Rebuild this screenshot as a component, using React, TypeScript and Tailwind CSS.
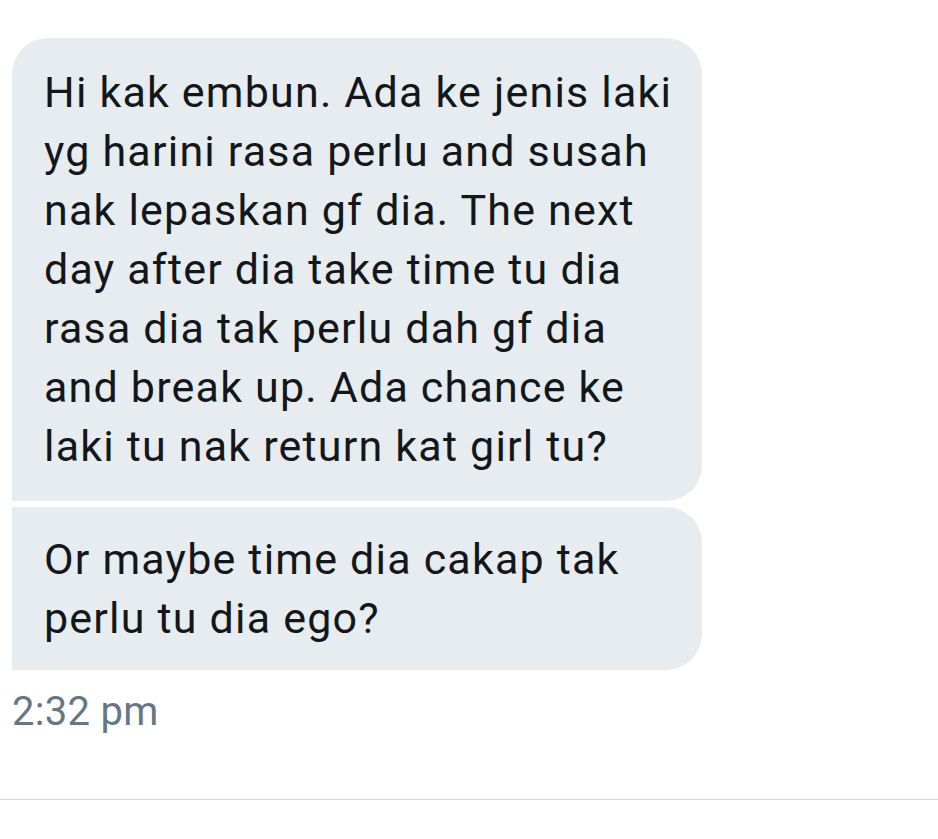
import React from "react";

const messages = [
  {
    lines: [
      "Hi kak embun. Ada ke jenis laki",
      "yg harini rasa perlu and susah",
      "nak lepaskan gf dia. The next",
      "day after dia take time tu dia",
      "rasa dia tak perlu dah gf dia",
      "and break up. Ada chance ke",
      "laki tu nak return kat girl tu?",
    ],
    box: "py-[25px] rounded-tl-[36px] rounded-tr-[36px] rounded-br-[36px]",
  },
  {
    lines: ["Or maybe time dia cakap tak", "perlu tu dia ego?"],
    box: "pt-[23px] pb-[22px] rounded-tr-[36px] rounded-br-[36px]",
  },
];

export default function App() {
  return (
    <div
      className="w-[938px] h-[839px] bg-white overflow-hidden"
      style={{ fontFamily: "Roboto, 'Liberation Sans', sans-serif" }}
    >
      <div className="pt-[38px] pl-[12px] flex flex-col gap-[6px]">
        {messages.map((m, i) => (
          <div
            key={i}
            className={`w-[690px] bg-[#e6ecf0] text-[#14171a] text-[43px] leading-[59px] tracking-[1.2px] pl-[32px] pr-[20px] ${m.box}`}
          >
            {m.lines.map((l, j) => (
              <div key={j} className="whitespace-nowrap">
                {l}
              </div>
            ))}
          </div>
        ))}
      </div>
      {/* timestamp */}
      <div className="pl-[12px] mt-[20px] text-[40px] leading-[44px] tracking-[0.3px] text-[#657786]">
        2:32 pm
      </div>
      <div className="mt-[65px] border-t border-[#ccd6dd]" />
    </div>
  );
}
